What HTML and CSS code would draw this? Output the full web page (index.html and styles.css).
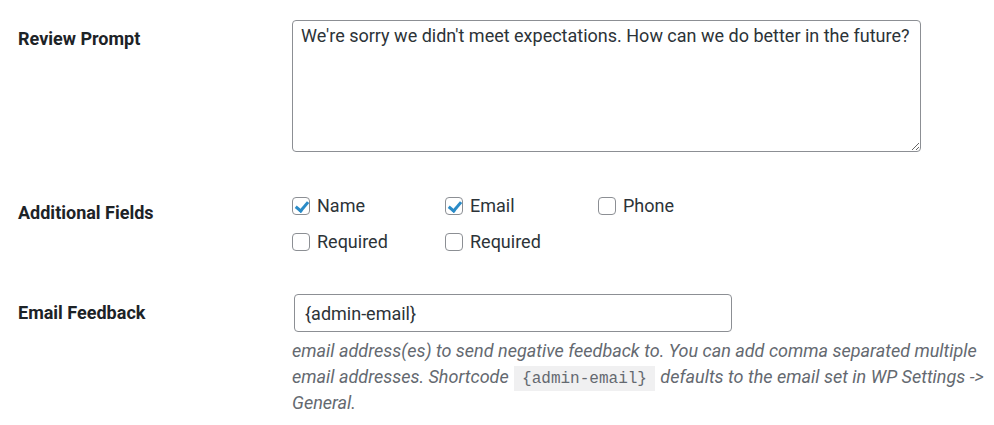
FILE: index.html
```html
<!DOCTYPE html>
<html lang="en">
<head>
    <meta charset="UTF-8">
    <meta name="viewport" content="width=device-width, initial-scale=1.0">
    <title>Feedback Settings</title>
    <link rel="stylesheet" href="styles.css">
</head>
<body>
    <div class="form-table">
        <div class="row row-prompt">
            <div class="row-label"><label for="review-prompt">Review Prompt</label></div>
            <div class="row-field">
                <textarea id="review-prompt" class="prompt-box">We're sorry we didn't meet expectations. How can we do better in the future?</textarea>
            </div>
        </div>

        <div class="row row-fields">
            <div class="row-label">Additional Fields</div>
            <div class="row-field">
                <div class="field-grid">
                    <label class="check"><input type="checkbox" checked> Name</label>
                    <label class="check"><input type="checkbox" checked> Email</label>
                    <label class="check"><input type="checkbox"> Phone</label>
                    <label class="check"><input type="checkbox"> Required</label>
                    <label class="check"><input type="checkbox"> Required</label>
                </div>
            </div>
        </div>

        <div class="row row-email">
            <div class="row-label"><label for="email-feedback">Email Feedback</label></div>
            <div class="row-field">
                <input type="text" id="email-feedback" class="email-input" value="{admin-email}">
                <p class="description">email address(es) to send negative feedback to. You can add comma separated multiple email addresses. Shortcode <code>{admin-email}</code> defaults to the email set in WP Settings -&gt; General.</p>
            </div>
        </div>
    </div>
</body>
</html>
```

FILE: styles.css
```css
body {
    font-family: Roboto, "Liberation Sans", sans-serif;
    font-size: 18px;
    color: #2c3338;
    background-color: #fff;
    margin: 0;
}
.form-table {
    padding: 0 0 0 18px;
}
.row {
    display: flex;
}
.row-label {
    width: 274px;
    flex-shrink: 0;
    padding-top: 27px;
    line-height: 24px;
    font-weight: bold;
    color: #1d2327;
}
.row-field {
    padding: 20px 0;
    flex: 1;
}
.row-prompt .row-field {
    padding-bottom: 22px;
}
.row-fields .row-field {
    padding-bottom: 18px;
}
.row-email .row-label {
    padding-top: 29px;
}
.row-email .row-field {
    padding-top: 22px;
}
.prompt-box {
    display: block;
    width: 629px;
    height: 132px;
    box-sizing: border-box;
    padding: 2px 8px;
    font-family: inherit;
    font-size: 18px;
    line-height: 26px;
    color: #2c3338;
    border: 1px solid #8c8f94;
    border-radius: 4px;
    resize: vertical;
}
.field-grid {
    display: grid;
    grid-template-columns: repeat(3, 153px);
    row-gap: 12px;
}
.check {
    display: flex;
    align-items: center;
    gap: 7px;
    line-height: 24px;
}
.check input {
    appearance: none;
    -webkit-appearance: none;
    width: 18px;
    height: 18px;
    margin: 0;
    border: 1px solid #8c8f94;
    border-radius: 4px;
    background: #fff;
    position: relative;
}
.check input:checked::before {
    content: "";
    position: absolute;
    left: 5px;
    top: 1px;
    width: 5px;
    height: 10px;
    border: solid #2a8bc7;
    border-width: 0 3px 3px 0;
    transform: rotate(40deg);
}
.email-input {
    display: block;
    width: 438px;
    height: 38px;
    box-sizing: border-box;
    padding: 0 10px;
    margin-left: 2px;
    font-family: inherit;
    font-size: 18px;
    color: #2c3338;
    border: 1px solid #8c8f94;
    border-radius: 4px;
}
.description {
    margin: 6px 0 0;
    font-style: italic;
    line-height: 26px;
    color: #646970;
    padding-right: 10px;
}
.description code {
    font-family: "Liberation Mono", monospace;
    font-style: normal;
    font-size: 16px;
    line-height: 1;
    background: #f0f0f1;
    padding: 4px 8px 3px;
    margin: 0 1px;
}
```
